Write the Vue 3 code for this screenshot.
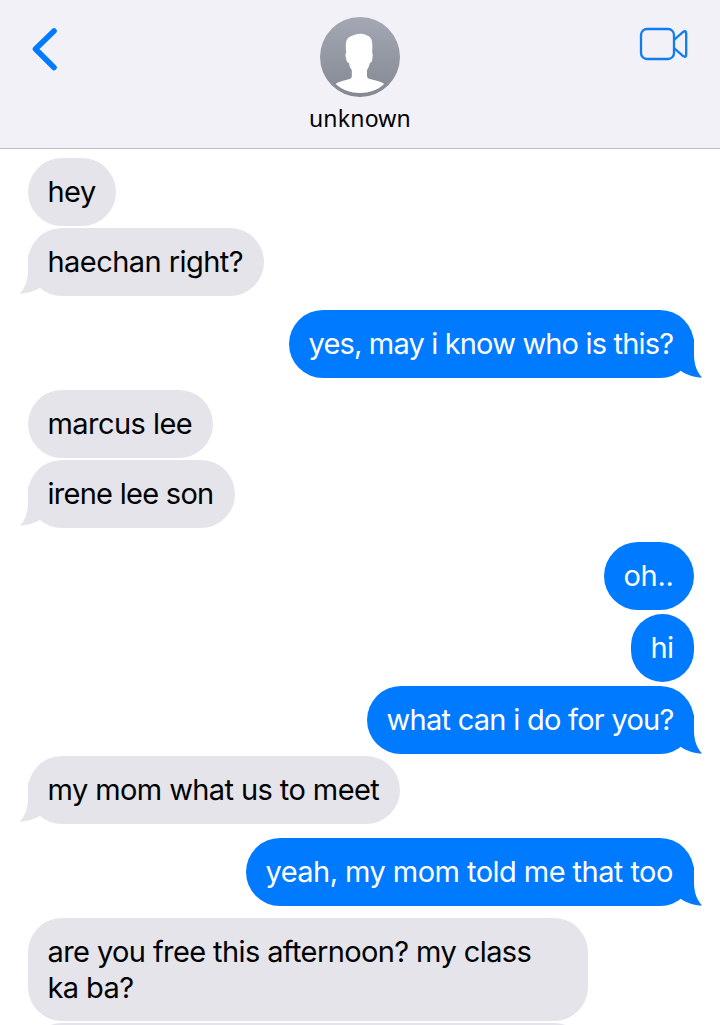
<script setup>
const messages = [
  { text: 'hey', gap: 0, width: 88 },
  { text: 'haechan right?', gap: 2, width: 236, tail: true },
  { text: 'yes, may i know who is this?', gap: 14, width: 405, sent: true, tail: true, tracking: -0.83 },
  { text: 'marcus lee', gap: 12, width: 185 },
  { text: 'irene lee son', gap: 2, width: 207, tail: true, tracking: -0.72 },
  { text: 'oh..', gap: 14, width: 90, sent: true, tracking: -0.3 },
  { text: 'hi', gap: 4, width: 63, sent: true },
  { text: 'what can i do for you?', gap: 4, width: 327, sent: true, tail: true, tracking: -0.73 },
  { text: 'my mom what us to meet', gap: 2, width: 372, tail: true, tracking: -0.59 },
  { text: 'yeah, my mom told me that too', gap: 14, width: 448, sent: true, tail: true },
  { text: 'are you free this afternoon? my class\nka ba?', gap: 12, width: 560, tracking: -0.6 },
  { text: '', gap: 2, width: 560 },
]

function bubbleStyle(m) {
  return {
    width: m.width + 'px',
    marginTop: m.gap + 'px',
    letterSpacing: (m.tracking || -0.55) + 'px',
  }
}
</script>

<template>
  <div class="phone">
    <header class="header">
      <svg class="back" width="28" height="44" viewBox="0 0 28 44">
        <path d="M24 4 L5.500 22 L24 40.500" />
      </svg>

      <div class="contact">
        <svg class="avatar" width="80" height="80" viewBox="0 0 80 80">
          <defs>
            <linearGradient id="grey" x1="0" y1="0" x2="0" y2="1">
              <stop offset="0" stop-color="#a3a8b4" />
              <stop offset="1" stop-color="#848892" />
            </linearGradient>
          </defs>
          <circle cx="40" cy="40" r="40" fill="url(#grey)" />
          <path
            fill="#fff"
            d="M26.200 36 C25.600 30 25.600 26 26.500 23.500 C27.500 21 29 20.500 31 19.300 C34 17.500 37 16.700 40 16.700 C44 16.700 50 18.500 51.500 22.500 C52.700 26 52.400 31 52.100 36 C53.200 36.500 52.800 39 52.300 42 C52 44.500 51.500 45.500 49.800 46 C49.300 49 48.300 51 47 53 L47 58.500 C47 60.500 47.800 61.300 50 62 C55 63.500 61 64.300 64.200 67 C58 73 49 76 40 76 C31 76 22 73 15.700 67 C19 64.300 25 63.500 29.500 62 C31.300 61.300 31.800 60.500 31.800 58.500 L31.800 53 C30.300 51 29.300 49 29 46 C27.200 45.500 26.600 44.500 26.200 42 C25.500 39 25 36.500 26.200 36 Z"
          />
        </svg>
        <div class="name">unknown</div>
      </div>

      <svg class="video" width="50" height="34" viewBox="0 0 50 34">
        <rect x="2" y="2" width="33" height="30" rx="6" />
        <path d="M35 13 L43.800 5.200 Q47.200 2.800 47.200 6.500 V27.500 Q47.200 31.200 43.800 28.800 L35 21" />
      </svg>
    </header>

    <main class="thread">
      <div
        v-for="(m, i) in messages"
        :key="i"
        class="bubble"
        :class="{ sent: m.sent }"
        :style="bubbleStyle(m)"
      >
        <span>{{ m.text }}</span>
        <svg v-if="m.tail" class="tail" width="26" height="40" viewBox="0 0 26 40">
          <path d="M8 0 V16 C8 27 5 34 0 39.500 C8 39.500 15 37 21 33 L26 20 Z" />
        </svg>
      </div>
    </main>
  </div>
</template>

<style>
body {
  margin: 0;
  background: #fff;
}
</style>

<style scoped>
.phone {
  width: 720px;
  height: 1025px;
  overflow: hidden;
  background: #fff;
  font-family: Inter, "Liberation Sans", sans-serif;
}

.header {
  display: flex;
  justify-content: space-between;
  box-sizing: border-box;
  height: 149px;
  padding: 0 31px 0 30px;
  background: #f2f1f7;
  border-bottom: 1px solid #bbbbc2;
}

.back {
  margin-top: 27px;
  margin-right: 22px;
  fill: none;
  stroke: #007aff;
  stroke-width: 5.6;
  stroke-linecap: round;
  stroke-linejoin: round;
}

.video {
  margin-top: 27px;
  fill: none;
  stroke: #0f7cf0;
  stroke-width: 2.3;
}

.contact {
  display: flex;
  flex-direction: column;
  align-items: center;
  width: 120px;
  padding-top: 17px;
}

.avatar {
  display: block;
}

.name {
  margin-top: 5px;
  padding-left: 1px;
  font-family: "Noto Sans", sans-serif;
  font-size: 23px;
  line-height: 32px;
  letter-spacing: 0.2px;
}

.thread {
  display: flex;
  flex-direction: column;
  align-items: flex-start;
  padding: 9px 26px 0 28px;
}

.bubble {
  position: relative;
  flex: none;
  box-sizing: border-box;
  min-height: 68px;
  padding: 16px 0 15px 19.5px;
  border-radius: 34px;
  background: #e5e4ea;
  color: #000;
  font-size: 29px;
  line-height: 36px;
  white-space: nowrap;
}

.bubble span {
  position: relative;
  z-index: 1;
  white-space: pre;
}

.sent {
  align-self: flex-end;
  background: #007aff;
  color: #fff;
}

.tail {
  position: absolute;
  left: -8px;
  bottom: 2px;
  fill: #e5e4ea;
}

.sent .tail {
  left: auto;
  right: -8px;
  bottom: 0;
  fill: #007aff;
  transform: scaleX(-1);
}
</style>
